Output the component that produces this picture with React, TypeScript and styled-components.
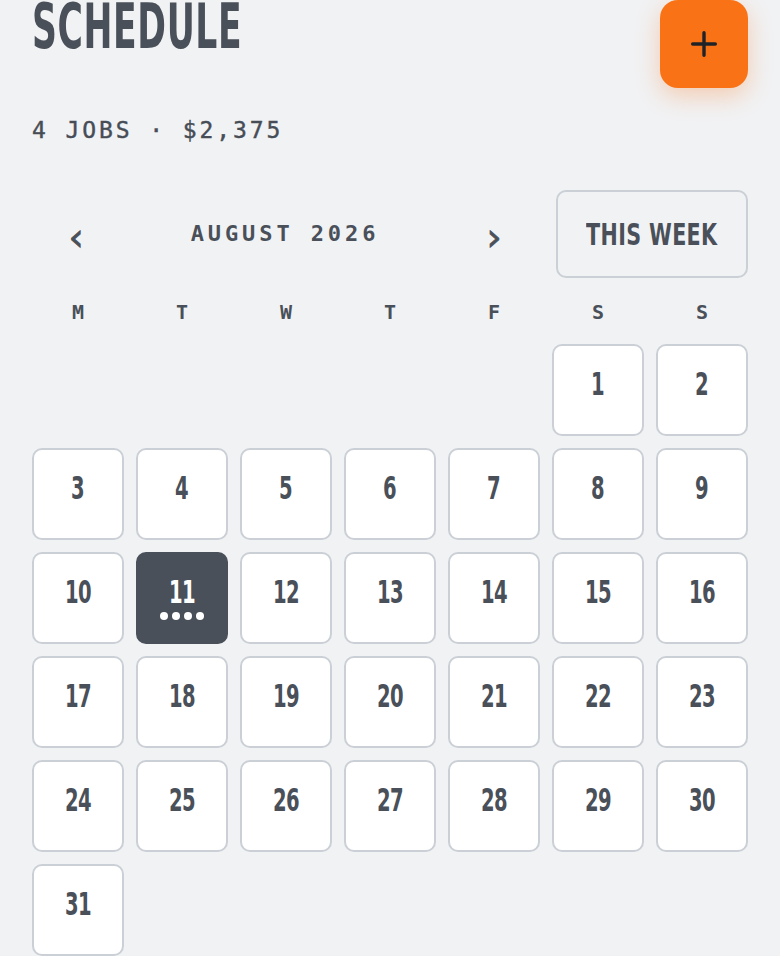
import styled, { createGlobalStyle } from "styled-components";

const GlobalStyle = createGlobalStyle`
  html, body {
    margin: 0;
    padding: 0;
    background: #f1f2f4;
  }
  * {
    box-sizing: border-box;
  }
`;

// no narrow display face offline, so the condensed DejaVu is squeezed a bit further
const CONDENSED = `"DejaVu Sans Condensed", "DejaVu Sans", sans-serif`;
const MONO = `"DejaVu Sans Mono", "Liberation Mono", monospace`;

const weekdays = ["M", "T", "W", "T", "F", "S", "S"];
// August 2026 starts on a Saturday
const leadingBlanks = 5;
const daysInMonth = 31;
const jobsByDay: Record<number, number> = { 11: 4 };
const selectedDay = 11;

export default function App(): JSX.Element {
  const cells: (number | null)[] = [];
  for (let i = 0; i < leadingBlanks; i++) cells.push(null);
  for (let d = 1; d <= daysInMonth; d++) cells.push(d);

  return (
    <StyledPage>
      <GlobalStyle />
      <StyledHeader>
        <StyledTitle>
          <StyledTitleText>SCHEDULE</StyledTitleText>
        </StyledTitle>
        <StyledAddButton aria-label="add job">
          <svg width="34" height="34" viewBox="0 0 24 24" fill="none">
            <path
              d="M12 4v16M4 12h16"
              stroke="#1f2328"
              strokeWidth="2.4"
              strokeLinecap="round"
            />
          </svg>
        </StyledAddButton>
      </StyledHeader>

      <StyledSummary>4 JOBS · $2,375</StyledSummary>

      <StyledToolbar>
        <StyledMonthNav>
          <StyledChevron aria-label="previous month">‹</StyledChevron>
          <StyledMonth>AUGUST 2026</StyledMonth>
          <StyledChevron aria-label="next month">›</StyledChevron>
        </StyledMonthNav>
        <StyledWeekButton>
          <StyledWeekLabel>THIS WEEK</StyledWeekLabel>
        </StyledWeekButton>
      </StyledToolbar>

      <StyledGrid>
        {weekdays.map((w, i) => (
          <StyledWeekday key={i}>{w}</StyledWeekday>
        ))}
        {cells.map((day, i) =>
          day === null ? (
            <div key={`blank-${i}`} />
          ) : (
            <StyledDay key={day} $selected={day === selectedDay}>
              <StyledDayNumber>{day}</StyledDayNumber>
              <StyledDots>
                {Array.from({ length: jobsByDay[day] || 0 }).map((_, j) => (
                  <StyledDot key={j} />
                ))}
              </StyledDots>
            </StyledDay>
          )
        )}
      </StyledGrid>
    </StyledPage>
  );
}

const StyledPage = styled.div`
  width: 780px;
  padding: 0 32px 40px;
  color: #4a5059;
`;

const StyledHeader = styled.header`
  display: flex;
  justify-content: space-between;
  align-items: flex-start;
`;

const StyledTitle = styled.h1`
  margin: -3px 0 0;
  height: 60px;
  font-family: ${CONDENSED};
  font-weight: 700;
  font-size: 62px;
  line-height: 60px;
  color: #4a5059;
`;

const StyledTitleText = styled.span`
  display: inline-block;
  transform: scaleX(0.62);
  transform-origin: left center;
  letter-spacing: 1px;
`;

const StyledAddButton = styled.button`
  width: 88px;
  height: 88px;
  border: none;
  border-radius: 18px;
  background: #f97316;
  display: flex;
  align-items: center;
  justify-content: center;
  box-shadow: 0 8px 24px rgba(249, 115, 22, 0.3);
  cursor: pointer;
`;

const StyledSummary = styled.p`
  margin: 27px 0 0;
  font-family: ${MONO};
  font-size: 23px;
  letter-spacing: 2.9px;
  line-height: 30px;
  color: #474d56;
  -webkit-text-stroke: 0.4px #474d56;
`;

const StyledToolbar = styled.div`
  margin-top: 45px;
  display: flex;
  gap: 18px;
  align-items: center;
`;

const StyledMonthNav = styled.div`
  flex: 1;
  display: flex;
  align-items: center;
  justify-content: space-between;
`;

const StyledChevron = styled.button`
  width: 88px;
  height: 88px;
  border: none;
  background: transparent;
  font-family: "DejaVu Sans", sans-serif;
  font-size: 38px;
  color: #4a5059;
  padding-top: 6px;
  -webkit-text-stroke: 0.8px #4a5059;
  cursor: pointer;
`;

const StyledMonth = styled.span`
  font-family: ${MONO};
  font-size: 22px;
  font-weight: 700;
  letter-spacing: 3.9px;
  color: #4a5059;
  margin-bottom: 2px;
`;

const StyledWeekButton = styled.button`
  width: 192px;
  height: 88px;
  border: 2px solid #cbd0d6;
  border-radius: 10px;
  background: transparent;
  display: flex;
  align-items: center;
  justify-content: center;
  padding: 0;
  color: #4a5059;
  cursor: pointer;
`;

const StyledWeekLabel = styled.span`
  display: inline-block;
  font-family: ${CONDENSED};
  font-weight: 700;
  font-size: 31px;
  letter-spacing: 0.5px;
  white-space: nowrap;
  transform: scaleX(0.74);
`;

const StyledGrid = styled.div`
  margin-top: 9px;
  display: grid;
  grid-template-columns: repeat(7, 92px);
  grid-template-rows: 45px;
  grid-auto-rows: 92px;
  gap: 12px;
`;

const StyledWeekday = styled.div`
  display: flex;
  align-items: center;
  justify-content: center;
  padding-top: 4px;
  font-family: ${MONO};
  font-size: 20px;
  font-weight: 700;
  color: #4a5059;
`;

const StyledDay = styled.button<{ $selected: boolean }>`
  display: flex;
  flex-direction: column;
  align-items: center;
  justify-content: center;
  gap: 4px;
  padding: 0;
  border: 2px solid ${(p) => (p.$selected ? "#4a5059" : "#cbd0d6")};
  border-radius: 10px;
  background: ${(p) => (p.$selected ? "#4a5059" : "#ffffff")};
  color: ${(p) => (p.$selected ? "#ffffff" : "#4a5059")};
  cursor: pointer;
`;

const StyledDayNumber = styled.span`
  display: inline-block;
  font-family: ${CONDENSED};
  font-weight: 700;
  font-size: 32px;
  line-height: 32px;
  letter-spacing: -1px;
  transform: scaleX(0.68);
`;

const StyledDots = styled.span`
  display: flex;
  gap: 4px;
  height: 8px;
  align-items: center;
`;

const StyledDot = styled.span`
  width: 8px;
  height: 8px;
  border-radius: 50%;
  background: #ffffff;
`;
